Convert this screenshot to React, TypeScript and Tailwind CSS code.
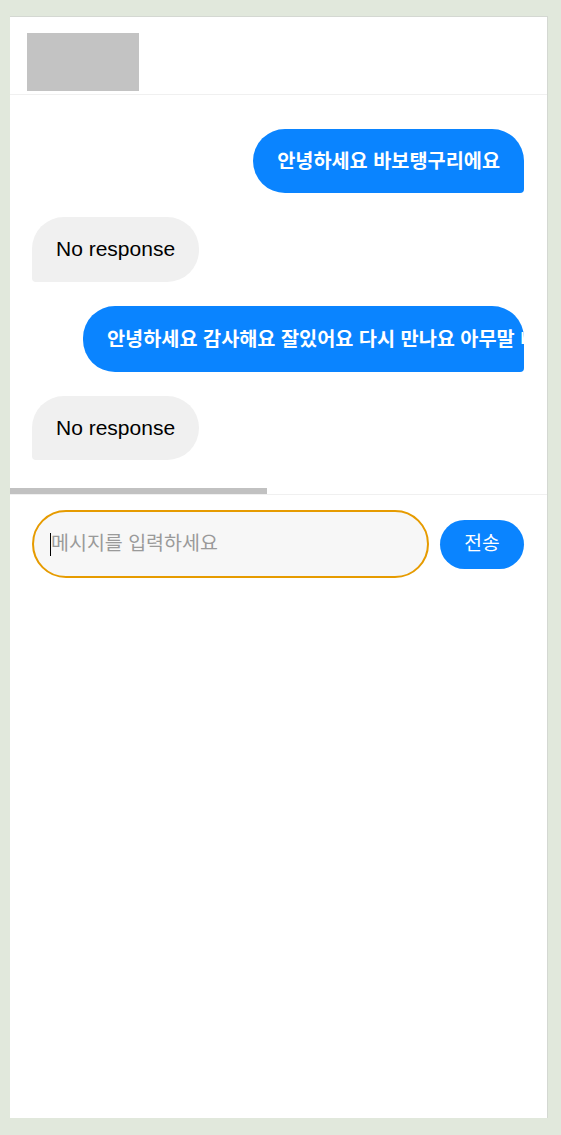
import React from "react";

const userMsg = "rounded-[32px] rounded-br-[4px] bg-[#0a84ff] text-white font-semibold text-[19.7px] leading-[28px] py-[18px] px-6 whitespace-nowrap overflow-hidden";
const botMsg = "rounded-[32px] rounded-bl-[4px] bg-[#f0f0f0] text-black text-[21px] leading-[28px] py-[18px] px-6 whitespace-nowrap";

export default function App() {
  return (
    <div
      className="h-[1135px] w-[561px] bg-[#e1e8dc] pt-[16px] pl-[10px] pb-[17px] overflow-hidden"
      style={{ fontFamily: '"Liberation Sans", "Noto Sans CJK KR", sans-serif' }}
    >
      <div className="w-[538px] h-[1102px] bg-white border-t border-r border-[#d4d8d2] flex flex-col">
        <div className="pt-4 pb-[3px] pl-[17px] border-b border-[#f0f0f0]">
          <div className="w-[112px] h-[58px] bg-[#c3c3c3]" />
        </div>
        <div className="flex flex-col gap-[24px] pt-[34px] pb-[28px] pl-[22px] pr-[23px]">
          <div className="flex justify-end">
            <div className={userMsg}>안녕하세요 바보탱구리에요</div>
          </div>
          <div className="flex justify-start">
            <div className={botMsg + " h-[65px]"}>No response</div>
          </div>
          <div className="flex justify-end">
            <div className={userMsg + " w-[441px] h-[66px] py-[19px]"}>
              안녕하세요 감사해요 잘있어요 다시 만나요 아무말 대잔치 입니다
            </div>
          </div>
          <div className="flex justify-start">
            <div className={botMsg}>No response</div>
          </div>
        </div>
        <div className="h-[6px] w-full">
          <div className="h-[6px] w-[257px] bg-[#c1c1c1]" />
        </div>
        <div className="border-t border-[#f0f0f0] flex items-center gap-[11px] pt-[15px] pl-[22px] pr-[23px]">
          <div className="w-[397px] h-[68px] rounded-[34px] border-2 border-[#e69b00] bg-[#f7f7f7] flex items-center pl-4">
            <span className="w-px h-[23px] bg-black" />
            <span className="text-[19.5px] text-[#9a9a9a]">메시지를 입력하세요</span>
          </div>
          <button className="w-[84px] h-[49px] rounded-full bg-[#0a84ff] text-white text-[19.3px] flex items-center justify-center">
            전송
          </button>
        </div>
      </div>
    </div>
  );
}
